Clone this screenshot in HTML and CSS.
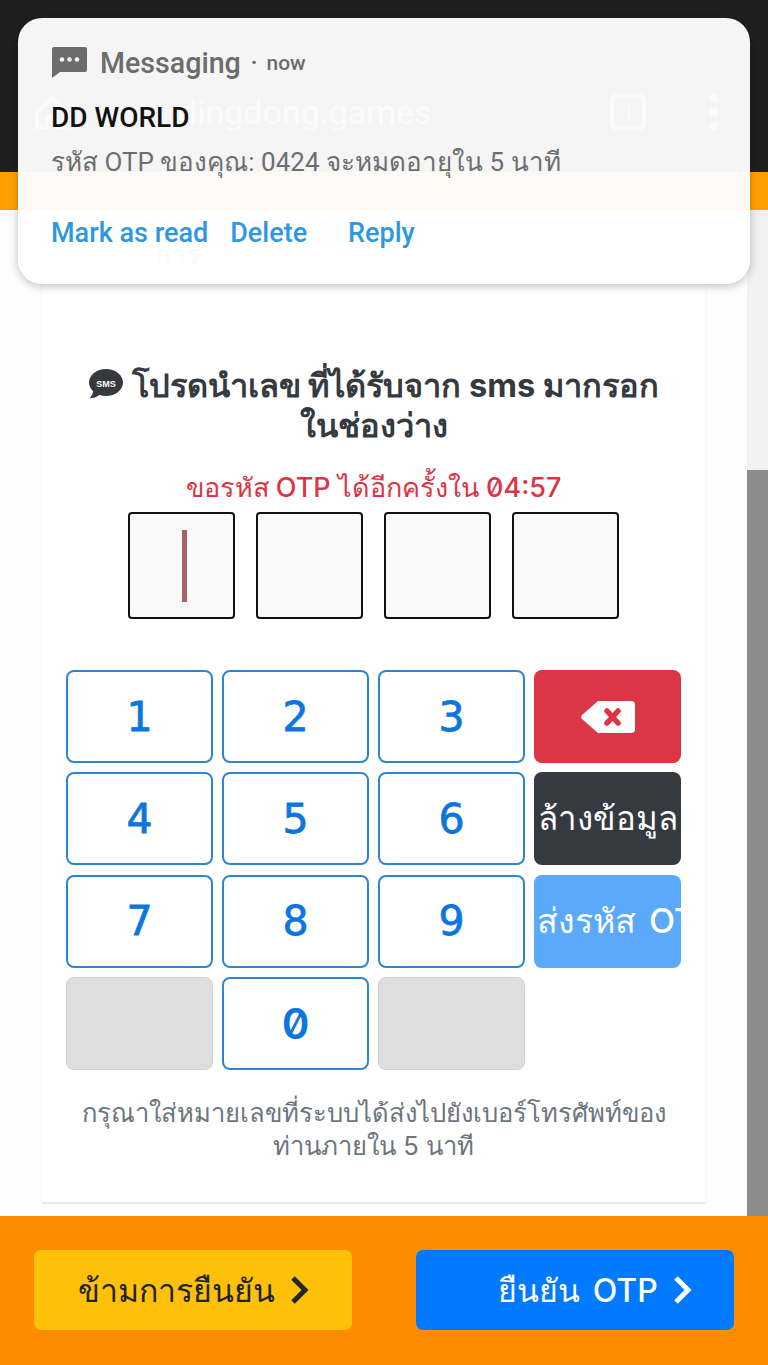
FILE: index.html
```html
<!DOCTYPE html>
<html lang="th">
<head>
    <meta charset="UTF-8">
    <meta name="viewport" content="width=device-width, initial-scale=1.0">
    <title>OTP</title>
    <link rel="stylesheet" href="styles.css">
</head>
<body>
    <div class="browser-bar">
        <svg class="home-icon" viewBox="0 0 40 40"><path d="M20 6 5 20v15h10V25h10v10h10V20z" fill="none" stroke="#fff" stroke-width="4"/></svg>
        <span class="url">dingdong.games</span>
        <span class="tab-count">1</span>
        <span class="dots"><i></i><i></i><i></i></span>
    </div>
    <div class="strip"></div>

    <div class="main">
        <div class="page">
            <div class="card">
                <div class="stub">การ</div>
                <h1 class="title">
                    <svg class="sms-icon" viewBox="0 0 36 32">
                        <path d="M18 1C8.6 1 1 7 1 14.500c0 3.400 1.600 6.400 4.200 8.800C4.800 26 3.200 29 1.600 30.500c3.600 0 7.400-1.600 9.900-3.400 2 .6 4.200.9 6.500.9 9.400 0 17-6 17-13.500S27.400 1 18 1z" fill="#343a40"/>
                        <text x="18" y="19" class="sms-label">SMS</text>
                    </svg>
                    โปรดนำเลข ที่ได้รับจาก sms มากรอก<br>ในช่องว่าง
                </h1>
                <div class="timer">ขอรหัส OTP ได้อีกครั้งใน 04:57</div>
                <div class="otp-row">
                    <div class="otp-box"><span class="caret"></span></div>
                    <div class="otp-box"></div>
                    <div class="otp-box"></div>
                    <div class="otp-box"></div>
                </div>
                <div class="keypad">
                    <button class="key">1</button>
                    <button class="key">2</button>
                    <button class="key">3</button>
                    <button class="key key-red">
                        <svg class="back-icon" viewBox="0 0 54 32">
                            <path d="M17 0H50a4 4 0 0 1 4 4V28a4 4 0 0 1-4 4H17L1 18a3 3 0 0 1 0-4z" fill="#fff"/>
                            <path d="M26 10l11 12M37 10 26 22" stroke="#dc3545" stroke-width="5.500" stroke-linecap="round"/>
                        </svg>
                    </button>
                    <button class="key">4</button>
                    <button class="key">5</button>
                    <button class="key">6</button>
                    <button class="key key-dark">ล้างข้อมูล</button>
                    <button class="key">7</button>
                    <button class="key">8</button>
                    <button class="key">9</button>
                    <button class="key key-send">ส่งรหัส OTP</button>
                    <div class="key-off"></div>
                    <button class="key key-zero">0</button>
                    <div class="key-off"></div>
                </div>
                <p class="note">กรุณาใส่หมายเลขที่ระบบได้ส่งไปยังเบอร์โทรศัพท์ของ<br>ท่านภายใน 5 นาที</p>
            </div>
        </div>
        <div class="scrollbar"><div class="thumb"></div></div>
    </div>

    <div class="bottom-bar">
        <button class="action action-skip">ข้ามการยืนยัน
            <svg class="chevron" viewBox="0 0 20 28"><path d="M4 2l12 12L4 26" fill="none" stroke="currentColor" stroke-width="5"/></svg>
        </button>
        <button class="action action-confirm">ยืนยัน OTP
            <svg class="chevron" viewBox="0 0 20 28"><path d="M4 2l12 12L4 26" fill="none" stroke="currentColor" stroke-width="5"/></svg>
        </button>
    </div>

    <div class="notification">
        <div class="notif-head">
            <svg class="notif-icon" viewBox="0 0 35 31">
                <path d="M2 0H33a2 2 0 0 1 2 2V23a2 2 0 0 1-2 2H8L0 31V2a2 2 0 0 1 2-2z" fill="#6c6c6c"/>
                <circle cx="10" cy="12.500" r="2.300" fill="#f4f4f4"/>
                <circle cx="17.500" cy="12.500" r="2.300" fill="#f4f4f4"/>
                <circle cx="25" cy="12.500" r="2.300" fill="#f4f4f4"/>
            </svg>
            <span class="notif-app">Messaging</span>
            <span class="notif-sep">·</span>
            <span class="notif-time">now</span>
        </div>
        <div class="notif-title">DD WORLD</div>
        <div class="notif-body">รหัส OTP ของคุณ: 0424 จะหมดอายุใน 5 นาที</div>
        <div class="notif-actions">
            <span>Mark as read</span>
            <span>Delete</span>
            <span class="reply">Reply</span>
        </div>
    </div>
</body>
</html>
```
FILE: styles.css
```css
* {
    margin: 0;
    padding: 0;
    box-sizing: border-box;
}

body {
    width: 768px;
    height: 1365px;
    display: flex;
    flex-direction: column;
    overflow: hidden;
    position: relative;
    background: white;
    font-family: Inter, "Noto Sans", sans-serif;
    font-variant-numeric: slashed-zero;
}

.browser-bar {
    height: 172px;
    flex-shrink: 0;
    background: #1f1f1f;
    display: flex;
    align-items: center;
    padding: 52px 50px 0 32px;
    color: rgba(255,255,255,0.6);
}

.home-icon {
    width: 40px;
    height: 40px;
    opacity: 0.6;
}

.url {
    font-family: Roboto, sans-serif;
    font-size: 34px;
    margin-left: 106px;
    flex: 1;
}

.tab-count {
    width: 36px;
    height: 36px;
    border: 4px solid rgba(255,255,255,0.6);
    border-radius: 6px;
    font-size: 18px;
    display: flex;
    align-items: center;
    justify-content: center;
    margin-right: 64px;
}

.dots {
    display: flex;
    flex-direction: column;
    gap: 6px;
}

.dots i {
    width: 8px;
    height: 8px;
    border-radius: 50%;
    background: rgba(255,255,255,0.6);
}

.strip {
    height: 38px;
    flex-shrink: 0;
    background: #ffa000;
}

.main {
    flex: 1;
    display: flex;
    min-height: 0;
    background: #fdfdfd;
}

.page {
    flex: 1;
    padding: 25px 42px 0;
}

.scrollbar {
    width: 21px;
    padding-top: 260px;
    background: #f1f1f1;
}

.thumb {
    height: 100%;
    background: #8c8c8c;
}

.card {
    background: white;
    padding: 0 24px 40px;
    border-bottom: 2px solid #ebe8ec;
    box-shadow: 0 0 3px rgba(0,0,0,0.06);
}

.stub {
    height: 40px;
    line-height: 40px;
    padding-left: 89px;
    font-size: 26px;
    color: #888;
}

.title {
    margin-top: 90px;
    font-size: 32.6px;
    line-height: 40px;
    font-weight: 700;
    color: #343a40;
    text-align: center;
    white-space: nowrap;
}

.sms-icon {
    width: 36px;
    height: 32px;
    vertical-align: -3px;
}

.sms-label {
    font-family: "Liberation Sans", sans-serif;
    font-size: 9px;
    font-weight: 700;
    fill: white;
    text-anchor: middle;
}

.timer {
    margin-top: 25px;
    height: 36px;
    line-height: 36px;
    font-size: 27px;
    font-weight: 500;
    color: #dc3545;
    text-align: center;
}

.otp-row {
    margin-top: 6px;
    display: flex;
    justify-content: center;
    gap: 21px;
}

.otp-box {
    width: 107px;
    height: 107px;
    border: 2px solid #111;
    border-radius: 4px;
    background: #f9f9f9;
    display: flex;
    align-items: center;
    justify-content: center;
}

.caret {
    width: 5px;
    height: 72px;
    margin-left: 5px;
    background: #a86068;
}

.keypad {
    margin-top: 51px;
    display: grid;
    grid-template-columns: repeat(4, 147px);
    grid-template-rows: repeat(4, 93px);
    column-gap: 9px;
    row-gap: 9.33px;
}

.key {
    border: 2px solid #2f86cf;
    border-radius: 8px;
    background: white;
    color: #0d76de;
    font-family: "DejaVu Sans", sans-serif;
    font-size: 41px;
    -webkit-text-stroke: 0.8px #0d76de;
    display: flex;
    align-items: center;
    justify-content: center;
    overflow: hidden;
    white-space: nowrap;
}

.key-zero {
    font-family: Inter, sans-serif;
    font-variant-numeric: slashed-zero;
    font-size: 42px;
    font-weight: 600;
    -webkit-text-stroke: 0;
}

.key-red {
    border: none;
    background: #dc3545;
}

.back-icon {
    width: 54px;
    height: 32px;
}

.key-dark {
    border: none;
    background: #343a40;
    color: white;
    font-family: Inter, "Noto Sans", sans-serif;
    font-size: 33px;
    font-weight: 500;
    -webkit-text-stroke: 0;
}

.key-send {
    border: none;
    background: #5aa9fa;
    color: white;
    font-family: Inter, "Noto Sans", sans-serif;
    font-size: 34px;
    font-weight: 500;
    word-spacing: 4px;
    -webkit-text-stroke: 0;
    justify-content: flex-start;
    padding-left: 3px;
}

.key-off {
    border: 1px solid #d4d0d0;
    border-radius: 8px;
    background: #dedede;
}

.note {
    margin-top: 26px;
    font-size: 25.6px;
    line-height: 33px;
    color: #6c757d;
    text-align: center;
    white-space: nowrap;
}

.bottom-bar {
    height: 149px;
    flex-shrink: 0;
    background: #ff8c00;
    display: flex;
    justify-content: space-between;
    padding: 34px 34px 0;
}

.action {
    width: 318px;
    height: 80px;
    border: none;
    border-radius: 7px;
    font-family: Inter, "Noto Sans", sans-serif;
    font-size: 32px;
    font-weight: 500;
    display: flex;
    align-items: center;
    justify-content: center;
    gap: 14px;
}

.action-skip {
    background: #ffc107;
    color: #212529;
}

.action-confirm {
    background: #007bff;
    color: white;
    padding-left: 40px;
    word-spacing: 4px;
}

.chevron {
    width: 20px;
    height: 28px;
}

/* notification lies over the page */
.notification {
    position: absolute;
    left: 18px;
    top: 18px;
    width: 732px;
    height: 266px;
    border-radius: 24px;
    background: rgba(255,255,255,0.955);
    box-shadow: 0 2px 8px rgba(0,0,0,0.25);
    padding: 29px 33px 0;
    font-family: Roboto, sans-serif;
}

.notif-head {
    display: flex;
    align-items: center;
    height: 31px;
    color: #6c6c6c;
    margin-left: 1px;
}

.notif-icon {
    width: 35px;
    height: 31px;
}

.notif-app {
    margin-left: 13px;
    font-size: 28.6px;
    font-weight: 500;
}

.notif-sep {
    margin-left: 10px;
    font-size: 22px;
    font-weight: 700;
}

.notif-time {
    margin-left: 9px;
    font-size: 21px;
    font-weight: 500;
}

.notif-title {
    margin-top: 24px;
    font-size: 28px;
    line-height: 32px;
    font-weight: 500;
    color: #111;
}

.notif-body {
    margin-top: 12px;
    font-size: 26px;
    line-height: 32px;
    color: #6e6e6e;
}

.notif-actions {
    margin-top: 39px;
    display: flex;
    gap: 22px;
    font-size: 27px;
    line-height: 32px;
    font-weight: 500;
    color: #2f97e0;
}

.reply {
    margin-left: 19px;
}
```
